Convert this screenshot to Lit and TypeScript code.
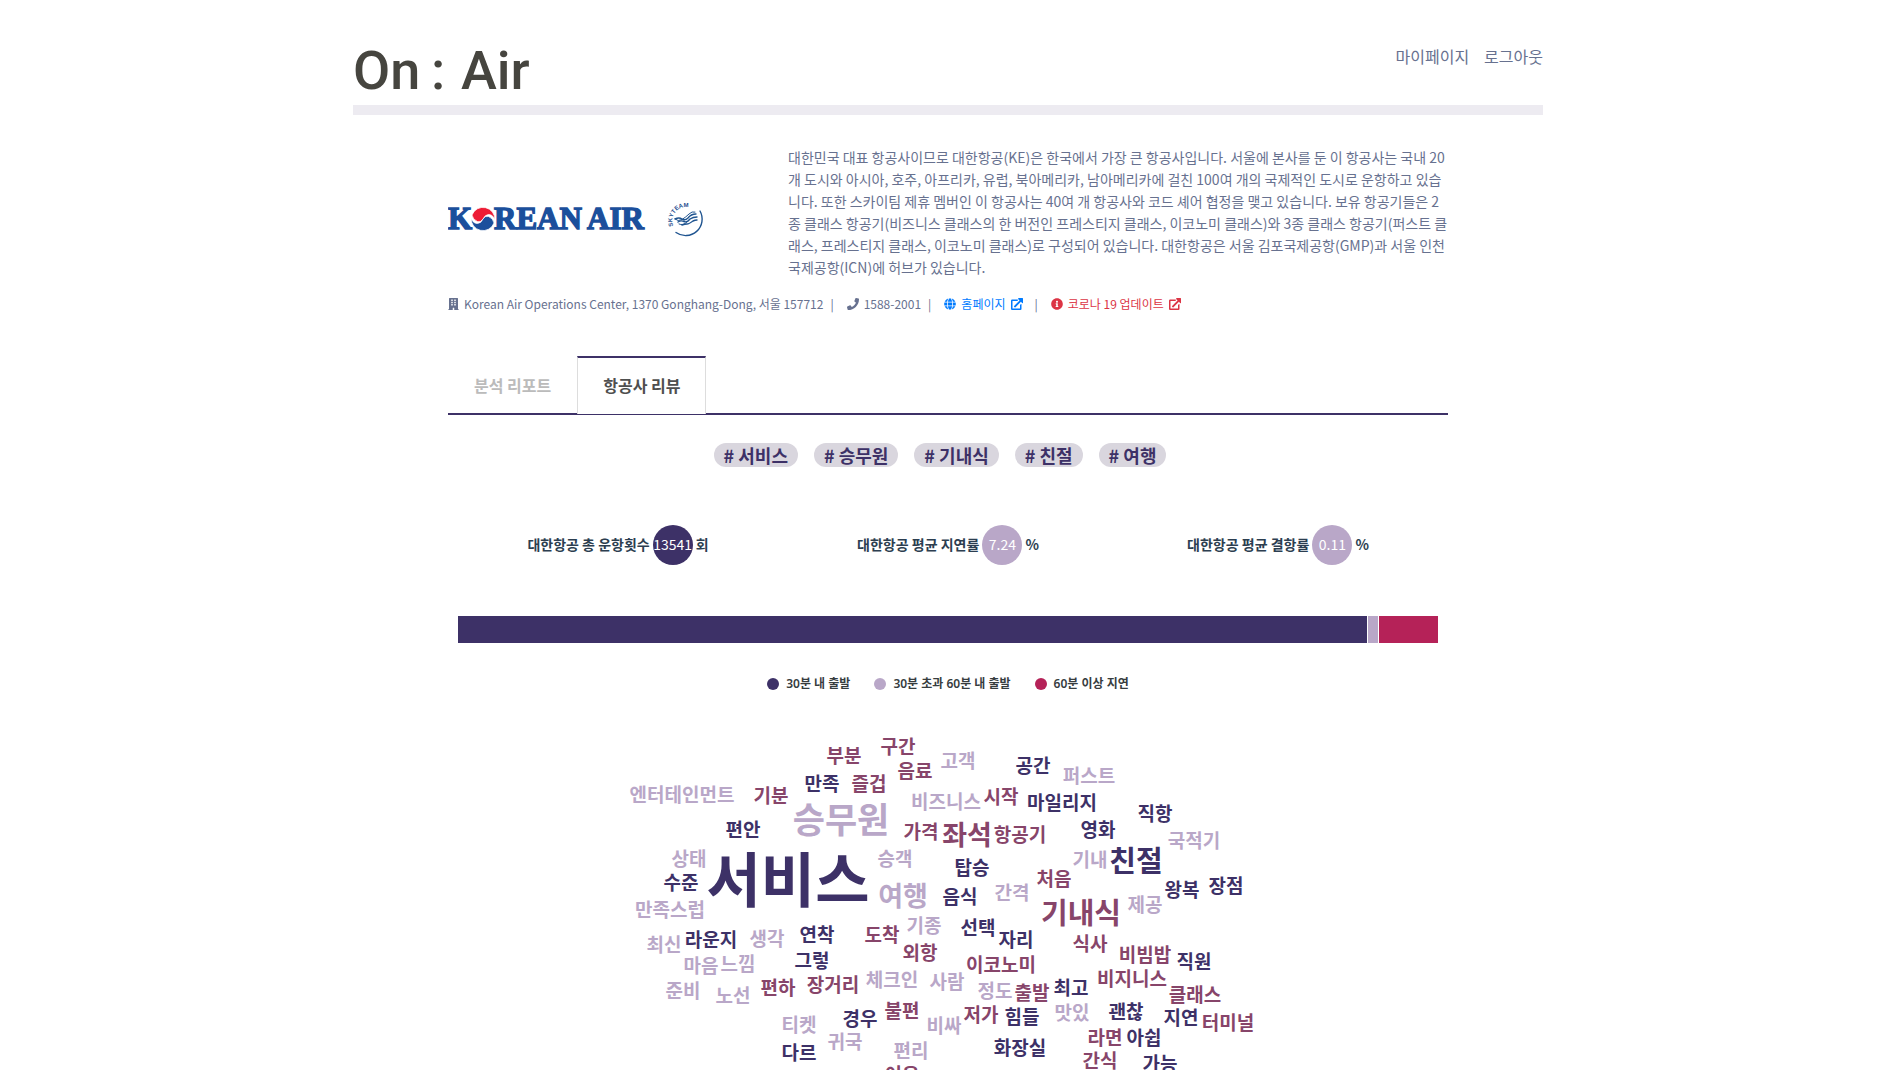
import { LitElement, html, svg, css } from "lit";
import { customElement, state } from "lit/decorators.js";

type Tone = "deep" | "lilac" | "plum";
type Word = [text: string, x: number, y: number, tone: Tone, size?: number];

const WORD_SIZE = 19;

const WORDS: Word[] = [
  ["서비스", 340, 162, "deep", 59],
  ["승무원", 393, 102, "lilac", 35],
  ["기내식", 633, 195, "plum", 29],
  ["친절", 688, 143, "deep", 29],
  ["여행", 455, 178, "lilac", 27],
  ["좌석", 519, 117, "plum", 27],
  ["부분", 396, 38, "plum"],
  ["구간", 450, 29, "plum"],
  ["음료", 467, 53, "plum"],
  ["만족", 374, 66, "deep"],
  ["즐겁", 421, 66, "plum"],
  ["엔터테인먼트", 234, 77, "lilac"],
  ["기분", 323, 78, "plum"],
  ["편안", 295, 112, "deep"],
  ["가격", 473, 114, "plum"],
  ["상태", 241, 141, "lilac"],
  ["승객", 447, 141, "lilac"],
  ["수준", 233, 165, "deep"],
  ["만족스럽", 222, 192, "lilac"],
  ["기종", 476, 208, "lilac"],
  ["라운지", 263, 222, "deep"],
  ["최신", 216, 227, "lilac"],
  ["생각", 319, 221, "lilac"],
  ["연착", 369, 217, "deep"],
  ["도착", 434, 217, "plum"],
  ["외항", 472, 235, "plum"],
  ["그렇", 364, 243, "deep"],
  ["마음", 253, 248, "lilac"],
  ["느낌", 290, 246, "lilac"],
  ["편하", 330, 270, "plum"],
  ["장거리", 385, 267, "plum"],
  ["체크인", 444, 262, "lilac"],
  ["준비", 235, 273, "lilac"],
  ["노선", 285, 278, "lilac"],
  ["경우", 412, 301, "deep"],
  ["불편", 454, 293, "plum"],
  ["티켓", 351, 307, "lilac"],
  ["귀국", 397, 324, "lilac"],
  ["편리", 463, 333, "lilac"],
  ["다르", 351, 335, "deep"],
  ["이용", 454, 357, "plum"],
  ["고객", 510, 43, "lilac"],
  ["공간", 585, 48, "deep"],
  ["퍼스트", 641, 58, "lilac"],
  ["비즈니스", 498, 84, "lilac"],
  ["시작", 553, 79, "plum"],
  ["마일리지", 614, 85, "deep"],
  ["직항", 707, 96, "deep"],
  ["항공기", 572, 117, "plum"],
  ["영화", 650, 112, "deep"],
  ["국적기", 746, 123, "lilac"],
  ["기내", 642, 142, "lilac"],
  ["탑승", 524, 150, "deep"],
  ["처음", 606, 161, "plum"],
  ["왕복", 734, 172, "deep"],
  ["장점", 778, 168, "deep"],
  ["음식", 512, 179, "deep"],
  ["간격", 564, 175, "lilac"],
  ["제공", 697, 187, "lilac"],
  ["선택", 530, 210, "deep"],
  ["자리", 568, 222, "deep"],
  ["식사", 642, 226, "plum"],
  ["비빔밥", 697, 237, "plum"],
  ["직원", 746, 244, "deep"],
  ["이코노미", 553, 247, "plum"],
  ["사람", 499, 264, "lilac"],
  ["정도", 547, 273, "lilac"],
  ["출발", 584, 275, "plum"],
  ["최고", 623, 270, "deep"],
  ["비지니스", 684, 261, "plum"],
  ["클래스", 747, 277, "plum"],
  ["저가", 533, 297, "plum"],
  ["힘들", 574, 299, "deep"],
  ["맛있", 624, 295, "lilac"],
  ["괜찮", 678, 294, "deep"],
  ["지연", 733, 300, "deep"],
  ["터미널", 780, 305, "plum"],
  ["비싸", 496, 308, "lilac"],
  ["라면", 657, 320, "plum"],
  ["아쉽", 696, 320, "deep"],
  ["화장실", 572, 330, "deep"],
  ["간식", 652, 343, "plum"],
  ["가능", 712, 346, "deep"],
];

const TAGS = ["서비스", "승무원", "기내식", "친절", "여행"];

const STATS = [
  { label: "대한항공 총 운항횟수", value: "13541", unit: "회", tone: "deep" },
  { label: "대한항공 평균 지연률", value: "7.24", unit: "%", tone: "lilac" },
  { label: "대한항공 평균 결항률", value: "0.11", unit: "%", tone: "lilac" },
];

const DELAYS = [
  { label: "30분 내 출발", share: 909, tone: "deep" },
  { label: "30분 초과 60분 내 출발", share: 10, tone: "lilac" },
  { label: "60분 이상 지연", share: 59, tone: "rose" },
];

const buildingIcon = html`<svg class="icon narrow" viewBox="0 0 448 512" aria-hidden="true">
  <path fill-rule="evenodd" d="M56 0h336a24 24 0 0 1 24 24v456h20q12 0 12 12v20H256v-84a12 12 0 0 0-12-12h-40a12 12 0 0 0-12 12v84H0v-20q0-12 12-12h20V24A24 24 0 0 1 56 0zM128 76v40a12 12 0 0 0 12 12h40a12 12 0 0 0 12-12V76a12 12 0 0 0-12-12h-40a12 12 0 0 0-12 12zm128 0v40a12 12 0 0 0 12 12h40a12 12 0 0 0 12-12V76a12 12 0 0 0-12-12h-40a12 12 0 0 0-12 12zM128 172v40a12 12 0 0 0 12 12h40a12 12 0 0 0 12-12v-40a12 12 0 0 0-12-12h-40a12 12 0 0 0-12 12zm128 0v40a12 12 0 0 0 12 12h40a12 12 0 0 0 12-12v-40a12 12 0 0 0-12-12h-40a12 12 0 0 0-12 12zM128 268v40a12 12 0 0 0 12 12h40a12 12 0 0 0 12-12v-40a12 12 0 0 0-12-12h-40a12 12 0 0 0-12 12zm128 0v40a12 12 0 0 0 12 12h40a12 12 0 0 0 12-12v-40a12 12 0 0 0-12-12h-40a12 12 0 0 0-12 12z"/>
</svg>`;

const phoneIcon = html`<svg class="icon" viewBox="0 0 512 512" aria-hidden="true">
  <path d="M493.4 24.6l-104-24c-11.3-2.6-22.9 3.3-27.5 13.9l-48 112c-4.2 9.8-1.4 21.3 6.9 28l60.6 49.6c-36 76.7-98.9 140.5-177.2 177.2l-49.6-60.6c-6.8-8.3-18.2-11.1-28-6.9l-112 48C3.9 366.5-2 378.1.6 389.4l24 104C27.1 504.2 36.7 512 48 512c256.1 0 464-207.5 464-464 0-11.2-7.7-20.9-18.6-23.4z"/>
</svg>`;

const globeIcon = html`<svg class="icon" viewBox="0 0 496 512" aria-hidden="true">
  <path d="M336.5 160C322 70.7 287.8 8 248 8s-74 62.7-88.5 152h177zM152 256c0 22.2 1.2 43.5 3.3 64h185.3c2.1-20.5 3.3-41.8 3.3-64s-1.2-43.5-3.3-64H155.3c-2.1 20.5-3.3 41.8-3.3 64zm324.7-96c-28.6-67.9-86.5-120.4-158-141.6 24.4 33.8 41.2 84.7 50 141.6h108zM177.2 18.4C105.8 39.6 47.8 92.1 19.3 160h108c8.7-56.9 25.5-107.8 49.9-141.6zM487.4 192H372.7c2.1 21 3.3 42.5 3.3 64s-1.2 43-3.3 64h114.6c5.5-20.5 8.6-41.8 8.6-64s-3.1-43.5-8.5-64zM120 256c0-21.5 1.2-43 3.3-64H8.6C3.2 212.5 0 233.8 0 256s3.2 43.5 8.6 64h114.6c-2-21-3.2-42.5-3.2-64zm39.5 96c14.5 89.3 48.7 152 88.5 152s74-62.7 88.5-152h-177zm159.3 141.6c71.4-21.2 129.4-73.7 158-141.6h-108c-8.8 56.9-25.6 107.8-50 141.6zM19.3 352c28.6 67.9 86.5 120.4 158 141.6-24.4-33.8-41.2-84.7-50-141.6h-108z"/>
</svg>`;

const infoIcon = html`<svg class="icon" viewBox="0 0 512 512" aria-hidden="true">
  <path d="M256 8C119.043 8 8 119.083 8 256c0 136.997 111.043 248 248 248s248-111.003 248-248C504 119.083 392.957 8 256 8zm0 110c23.196 0 42 18.804 42 42s-18.804 42-42 42-42-18.804-42-42 18.804-42 42-42zm56 254c0 6.627-5.373 12-12 12h-88c-6.627 0-12-5.373-12-12v-24c0-6.627 5.373-12 12-12h12v-64h-12c-6.627 0-12-5.373-12-12v-24c0-6.627 5.373-12 12-12h64c6.627 0 12 5.373 12 12v100h12c6.627 0 12 5.373 12 12v24z"/>
</svg>`;

const externalIcon = html`<svg class="icon" viewBox="0 0 512 512" aria-hidden="true">
  <path d="M312 0h176a24 24 0 0 1 24 24v176q0 18-17 22-13 2-22-8l-50-50-233 233q-17 15-34 0l-23-23q-15-17 0-34L366 107l-48-48q-16-16-10-40 3-15 4-19z"/>
  <path d="M288 64v64H64v320h320V288l64-32v208a48 48 0 0 1-48 48H48a48 48 0 0 1-48-48V112a48 48 0 0 1 48-48z"/>
</svg>`;

/** Header with the site name and the account links. */
@customElement("site-header")
class SiteHeader extends LitElement {
  static styles = css`
    :host {
      display: block;
      border-bottom: 10px solid #edebf1;
    }
    .bar {
      display: flex;
      justify-content: space-between;
      align-items: flex-start;
      height: 105px;
      box-sizing: border-box;
      padding-top: 34px;
    }
    .brand {
      display: block;
      line-height: 0;
    }
    .brand-mark {
      width: 192px;
      height: 70px;
      fill: #46453f;
      font: 500 54px Roboto, sans-serif;
    }
    nav {
      display: flex;
      gap: 15px;
      padding-top: 10px;
    }
    .link {
      color: #67718f;
      font-size: 16px;
      line-height: 24px;
      text-decoration: none;
    }
  `;

  render() {
    return html`
      <header class="bar">
        <a class="brand" href="#" aria-label="On : Air">
          <svg class="brand-mark" viewBox="0 0 192 70">
            <text x="0" y="55">On</text>
            <text x="78" y="55">:</text>
            <text x="108" y="55">Air</text>
          </svg>
        </a>
        <nav>
          <a class="link" href="#mypage">마이페이지</a>
          <a class="link" href="#logout">로그아웃</a>
        </nav>
      </header>
    `;
  }
}

/** Airline logo, description and contact line. */
@customElement("airline-profile")
class AirlineProfile extends LitElement {
  static styles = css`
    :host {
      display: block;
      color: #67718f;
    }
    .intro {
      display: grid;
      grid-template-columns: 34fr 66fr;
      align-items: center;
    }
    .logo {
      width: 256px;
      height: 40px;
      margin-top: 16px;
    }
    .wordmark {
      fill: #1b4f9c;
      stroke: #1b4f9c;
      stroke-width: 1.4;
      font: bold 31px "Liberation Serif", serif;
    }
    .alliance {
      fill: #1f4f8f;
      font: bold 6px "Liberation Sans", sans-serif;
    }
    .about {
      margin: 0;
      font-size: 14px;
      line-height: 22px;
    }
    .contact {
      display: flex;
      align-items: center;
      margin-top: 17px;
      font-size: 12px;
      line-height: 18px;
    }
    .item {
      display: flex;
      align-items: center;
      gap: 5px;
      color: inherit;
      text-decoration: none;
    }
    .item.home {
      color: #007bff;
      margin-right: 5px;
    }
    .item.notice {
      color: #dc3545;
    }
    .sep {
      padding: 0 13px 0 7px;
    }
    .icon {
      width: 12px;
      height: 12px;
      fill: currentColor;
    }
    .icon.narrow {
      width: 11px;
    }
  `;

  render() {
    return html`
      <section class="intro">
        <svg class="logo" viewBox="0 0 256 40" role="img" aria-label="Korean Air">
          <g class="wordmark">
            <text x="0" y="29">K</text>
            <text x="46" y="29">REAN</text>
            <text x="139" y="29">AIR</text>
          </g>
          <circle cx="35" cy="19" r="12.500" fill="#fff"/>
          <g stroke="#fff" stroke-width="0.700">
            <path id="comma" fill="#ed1b34" d="M24 15A11.800 11.800 0 0 1 46.800 20Q45.500 15 41 14.500Q37 14.500 35 19Q33 22.500 29.500 21.500Q25 20 24 15z"/>
            <path fill="#1b4f9c" transform="rotate(180 35 19)" d="M24 15A11.800 11.800 0 0 1 46.800 20Q45.500 15 41 14.500Q37 14.500 35 19Q33 22.500 29.500 21.500Q25 20 24 15z"/>
          </g>
          <g fill="none" stroke="#1f5490" stroke-linecap="round">
            <path stroke-width="1.400" d="M252 11A16.500 16.500 0 0 1 228 32.500"/>
            <path stroke-width="1.400" d="M227 19Q231 17 234 19T240 18Q243 14 248 14M230 22Q233 20 236 21.500T242 19Q245 17 249 17M234 25Q237 24 239 24T245 21Q247 20 249 20"/>
            <path stroke-width="1" d="M227 19Q230 22 234 19.500T241 14Q244 11 247 12M231 24Q235 26 239 22"/>
          </g>
          <path id="arc" fill="none" d="M225.500 26A13 13 0 0 1 250 15"/>
          <text class="alliance"><textPath href="#arc">SKYTEAM</textPath></text>
        </svg>
        <p class="about">
          대한민국 대표 항공사이므로 대한항공(KE)은 한국에서 가장 큰 항공사입니다. 서울에 본사를 둔 이
          항공사는 국내 20개 도시와 아시아, 호주, 아프리카, 유럽, 북아메리카, 남아메리카에 걸친 100여
          개의 국제적인 도시로 운항하고 있습니다. 또한 스카이팀 제휴 멤버인 이 항공사는 40여 개
          항공사와 코드 셰어 협정을 맺고 있습니다. 보유 항공기들은 2종 클래스 항공기(비즈니스 클래스의
          한 버전인 프레스티지 클래스, 이코노미 클래스)와 3종 클래스 항공기(퍼스트 클래스, 프레스티지
          클래스, 이코노미 클래스)로 구성되어 있습니다. 대한항공은 서울 김포국제공항(GMP)과 서울
          인천국제공항(ICN)에 허브가 있습니다.
        </p>
      </section>
      <section class="contact">
        <span class="item">${buildingIcon}Korean Air Operations Center, 1370 Gonghang-Dong, 서울 157712</span>
        <span class="sep">|</span>
        <span class="item">${phoneIcon}1588-2001</span>
        <span class="sep">|</span>
        <a class="item home" href="#home">${globeIcon}홈페이지${externalIcon}</a>
        <span class="sep">|</span>
        <a class="item notice" href="#covid">${infoIcon}코로나 19 업데이트${externalIcon}</a>
      </section>
    `;
  }
}

/** Review panel: hashtags, flight figures, delay bar and word cloud. */
@customElement("review-panel")
class ReviewPanel extends LitElement {
  static styles = css`
    :host {
      display: block;
    }
    .tags {
      display: flex;
      justify-content: center;
      margin: 0;
      padding: 28px 0 0;
      list-style: none;
    }
    .tag {
      margin-right: 16px;
      padding: 0 10px;
      border-radius: 12px;
      background: #d9d6de;
      color: #3d3167;
      font-size: 18px;
      font-weight: 700;
      line-height: 24px;
    }
    .stats {
      display: grid;
      grid-template-columns: repeat(3, 1fr);
      padding: 58px 5px 0;
    }
    .stat {
      display: flex;
      justify-content: center;
      align-items: center;
      gap: 3px;
      color: #2c3e50;
      font-size: 14px;
      font-weight: 700;
    }
    .caption,
    .bubble {
      padding-bottom: 3px;
    }
    .bubble {
      display: flex;
      justify-content: center;
      align-items: center;
      box-sizing: border-box;
      width: 40px;
      height: 40px;
      border-radius: 50%;
      color: #fff;
      font-weight: 400;
    }
    .deep {
      background: #3d3167;
    }
    .lilac {
      background: #b9a7c8;
    }
    .rose {
      background: #b52258;
    }
    .delays {
      display: flex;
      gap: 1px;
      height: 27px;
      margin: 51px 10px 0;
    }
    .legend {
      display: flex;
      justify-content: center;
      gap: 24px;
      margin: 32px 0 0;
      padding: 0;
      list-style: none;
      color: #373d3f;
      font-family: "Noto Sans", "Noto Sans CJK KR", sans-serif;
      font-size: 12px;
      font-weight: 600;
      line-height: 18px;
    }
    .key {
      display: flex;
      align-items: center;
      gap: 7px;
    }
    .dot {
      width: 12px;
      height: 12px;
      border-radius: 50%;
    }
    .cloud {
      display: block;
      width: 100%;
      margin-top: 25px;
      font-weight: 700;
      text-anchor: middle;
    }
    .word-deep {
      fill: #3d3167;
    }
    .word-lilac {
      fill: #b9a7c8;
    }
    .word-plum {
      fill: #87456a;
    }
  `;

  render() {
    return html`
      <ul class="tags">
        ${TAGS.map((tag) => html`<li class="tag"># ${tag}</li>`)}
      </ul>
      <div class="stats">
        ${STATS.map(
          (s) => html`<div class="stat">
            <span class="caption">${s.label}</span><span class="bubble ${s.tone}">${s.value}</span><span class="caption">${s.unit}</span>
          </div>`
        )}
      </div>
      <div class="delays">
        ${DELAYS.map((d) => html`<div class=${d.tone} style="flex: ${d.share} 0 0"></div>`)}
      </div>
      <ul class="legend">
        ${DELAYS.map((d) => html`<li class="key"><span class="dot ${d.tone}"></span>${d.label}</li>`)}
      </ul>
      <svg class="cloud" viewBox="0 0 1000 352">
        ${WORDS.map(([text, x, y, tone, size = WORD_SIZE]) => svg`
          <text class="word-${tone}" x=${x} y=${Math.round(y + size * 0.37)} font-size=${size}>${text}</text>`)}
      </svg>
    `;
  }
}

@customElement("app-root")
class AppRoot extends LitElement {
  static styles = css`
    :host {
      display: block;
      padding-right: 4px;
      background: #fff;
      font-family: "Noto Sans CJK KR", sans-serif;
    }
    .page {
      max-width: 1190px;
      margin: 0 auto;
    }
    .content {
      max-width: 1000px;
      margin: 0 auto;
      padding-top: 31px;
    }
    .tabs {
      display: flex;
      margin-top: 43px;
      border-bottom: 2px solid #3d3167;
    }
    .tab {
      height: 58px;
      margin-bottom: -1px;
      padding: 0 25px 2px;
      border: 1px solid transparent;
      border-top-width: 2px;
      border-bottom: 0;
      background: none;
      color: #bbb;
      font: inherit;
      font-size: 16px;
      font-weight: 700;
    }
    .tab[aria-selected="true"] {
      border-color: #3d3167 #ddd;
      background: #fff;
      color: #4f4f4f;
    }
  `;

  @state() private active = "항공사 리뷰";

  render() {
    return html`
      <div class="page">
        <site-header></site-header>
        <main class="content">
          <airline-profile></airline-profile>
          <div class="tabs" role="tablist">
            ${["분석 리포트", "항공사 리뷰"].map(
              (name) => html`<button
                class="tab"
                role="tab"
                aria-selected=${name === this.active ? "true" : "false"}
                @click=${() => (this.active = name)}
              >${name}</button>`
            )}
          </div>
          <review-panel></review-panel>
        </main>
      </div>
    `;
  }
}
